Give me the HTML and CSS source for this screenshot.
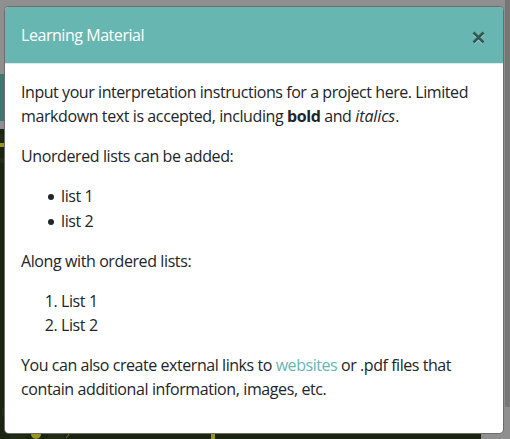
FILE: index.html
```html
<!DOCTYPE html>
<html lang="en">
<head>
<meta charset="utf-8">
<title>Learning Material</title>
<link rel="stylesheet" href="styles.css">
</head>
<body>
<svg class="backdrop" width="510" height="439" viewBox="0 0 510 439" aria-hidden="true">
  <rect width="510" height="439" fill="#8f8f8f"/>
  <rect y="74" width="30" height="47" fill="#407571"/>
  <rect y="129" width="481" height="310" fill="#1b2410"/>
  <path d="M0 134h3v6H0zM0 158h4v5H0zM2 408h2v8H2zM10 435h16v4H10zM48 434h16v5H48z" fill="#222b15"/>
  <rect y="143" width="20" height="4" fill="#98951c"/>
  <circle cx="36" cy="434" r="5" fill="#98951c"/>
  <path d="M66 438l4-5" stroke="#77781e"/>
  <rect x="211" y="430" width="4" height="9" fill="#98951c"/>
  <rect x="505" width="5" height="407" fill="#777"/>
</svg>
<div class="modal" role="dialog" aria-labelledby="title">
  <header class="modal-header">
    <h1 class="modal-title" id="title">Learning Material</h1>
    <button class="close" type="button" aria-label="Close">
      <svg width="13" height="14" viewBox="0 0 13 14"><path d="M2 3l9 9M11 3l-9 9" stroke="#b5e0dc" stroke-width="2.6"/><path d="M1.5 1.5l10 10M11.5 1.5l-10 10" stroke="#315855" stroke-width="2.7"/></svg>
    </button>
  </header>
  <div class="modal-body">
    <p><span class="snug">Input your interpretation instructions for a project here. Limited</span><br>markdown text is accepted, including <strong>bold</strong> and <em>italics</em>.</p>
    <p>Unordered lists can be added:</p>
    <ul><li>list 1</li><li>list 2</li></ul>
    <p>Along with ordered lists:</p>
    <ol><li>List 1</li><li>List 2</li></ol>
    <p><span class="snug">You can also create external links to <a>websites</a> or .pdf files that</span><br>contain additional information, images, etc.</p>
  </div>
</div>
</body>
</html>
```
FILE: styles.css
```css
* { box-sizing: border-box; }
body {
  margin: 0;
  width: 510px;
  height: 439px;
  overflow: hidden;
  padding: 7px 7px 6px 5px;
  font: 16px/24px "Open Sans", "Noto Sans", sans-serif;
  letter-spacing: -0.4px;
  color: #212529;
}
.backdrop { position: absolute; inset: 0; z-index: -1; }
.modal {
  width: 498px;
  height: 426px;
  background: #fff;
  border-radius: 4px;
  box-shadow: 0 0 0 1px #6d6d6d;
  overflow: hidden;
}
.modal-header {
  display: flex;
  justify-content: space-between;
  height: 57px;
  padding: 16px;
  background: #67b6b1;
  border-bottom: 1px solid #dee9e8;
}
.modal-title { margin: 0; font-size: 16px; font-weight: 400; letter-spacing: -0.45px; color: #fff; }
.close {
  width: 13px;
  height: 14px;
  margin: 8px 2px 0 0;
  padding: 0;
  border: 0;
  background: none;
}
.close svg { display: block; }
.modal-body { padding: 16px; white-space: nowrap; }
p, ul, ol { margin: 0 0 16px; }
ul, ol { padding-left: 40px; }
ul { list-style: none; }
ul li::before {
  content: "";
  display: inline-block;
  width: 6px;
  height: 6px;
  margin: 0 7px 0 -13px;
  border-radius: 50%;
  background: #212529;
  vertical-align: 2px;
}
ul li:first-child { margin-bottom: 1px; }
.snug { letter-spacing: -0.44px; }
strong { font-weight: 700; }
em { letter-spacing: -0.1px; }
a { color: #67b6b1; }
```
